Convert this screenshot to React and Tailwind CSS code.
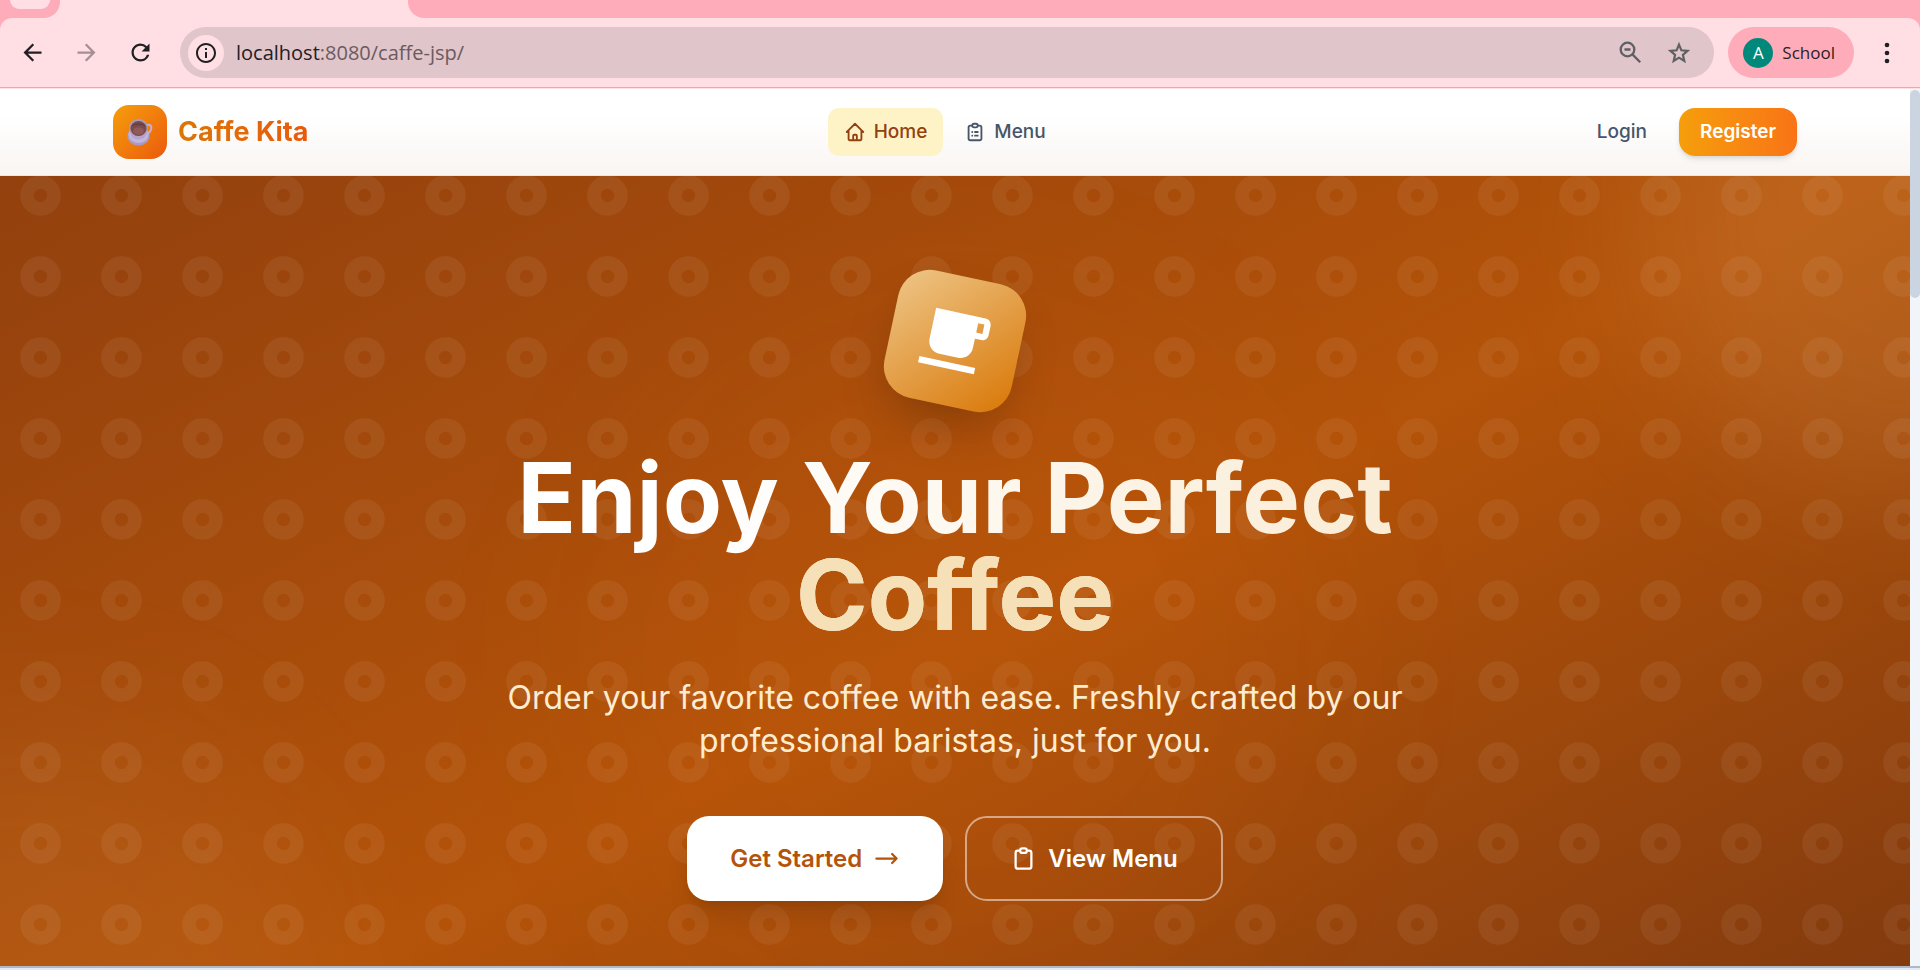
import React from 'react'
import {
  HiOutlineArrowNarrowRight,
  HiOutlineClipboard,
  HiOutlineClipboardList,
  HiOutlineHome,
} from 'react-icons/hi'
import { MdArrowBack, MdArrowForward, MdInfoOutline, MdRefresh } from 'react-icons/md'

function TabStrip() {
  return (
    <div className="flex h-[18px] bg-[#ffacba]">
      <div className="w-[60px] shrink-0 bg-[#ffdfe4]">
        <div className="flex h-[18px] justify-center rounded-br-[16px] bg-[#ffacba]">
          <div className="h-[9px] w-10 rounded-b-[14px] bg-[#ffdfe4]" />
        </div>
      </div>
      <div className="w-[348px] shrink-0 bg-[#ffdfe4]" />
      <div className="flex-1 bg-[#ffdfe4]">
        <div className="h-full rounded-bl-[16px] bg-[#ffacba]" />
      </div>
    </div>
  )
}

function BrowserBar() {
  return (
    <div className="bg-[#ffacba]">
      <div className="flex h-[69px] items-center rounded-t-[12px] bg-[#ffdfe4] pr-[26px] pl-[19px]">
        <button aria-label="Back" className="mr-[27px] text-[#1f2023]">
          <MdArrowBack size={27} />
        </button>
        <button aria-label="Forward" className="mr-[27px] text-[#a58f94]">
          <MdArrowForward size={27} />
        </button>
        <button aria-label="Reload" className="mr-[26px] text-[#1f2023]">
          <MdRefresh size={27} />
        </button>
        <div className="flex h-[51px] flex-1 items-center rounded-full bg-[#e0c5ca] pr-[22px] pl-2">
          <button
            aria-label="Site information"
            className="flex size-9 items-center justify-center rounded-full bg-[#ffdfe4] text-[#1f2023]"
          >
            <MdInfoOutline size={24} />
          </button>
          <div className="ml-3 flex-1 font-['Open_Sans','Noto_Sans',sans-serif] text-[20px] text-[#6a5b60]">
            <span className="text-[#1f2023]">localhost</span>:8080/caffe-jsp/
          </div>
          <button aria-label="Zoom" className="mr-6 text-[#5f6063]">
            <svg width="23" height="23" viewBox="0 0 23 23" fill="none" stroke="currentColor" strokeWidth="2.3">
              <circle cx="8.5" cy="8.5" r="6.8" />
              <path d="M5.5 8.5h6M13.4 13.4l7.8 7.8" />
            </svg>
          </button>
          <button aria-label="Bookmark" className="text-[#5f6063]">
            <svg width="26" height="26" viewBox="0 0 24 24" fill="none" stroke="currentColor" strokeWidth="2">
              <path d="M12 4.200l2.200 5.300 5.700.5-4.300 3.700 1.300 5.600L12 16.300l-4.900 3 1.300-5.600L4.100 10l5.700-.5z" />
            </svg>
          </button>
        </div>
        <button className="ml-[14px] flex h-[51px] items-center rounded-full bg-[#ffacba] pr-[19px] pl-[15px] font-['Open_Sans','Noto_Sans',sans-serif] text-[17px] text-[#2b1d21]">
          <span className="mr-[9px] flex size-[30px] items-center justify-center rounded-full bg-[#00897b] text-[17px] text-white">
            A
          </span>
          School
        </button>
        <button aria-label="More" className="ml-[26px] text-[#1f2023]">
          <svg width="14" height="24" viewBox="0 0 14 24" fill="currentColor">
            <circle cx="7" cy="4" r="2.3" />
            <circle cx="7" cy="12" r="2.3" />
            <circle cx="7" cy="20" r="2.3" />
          </svg>
        </button>
      </div>
      <div className="h-px bg-[#d3b3bb]" />
      <div className="h-px bg-[#ffdfe4]" />
    </div>
  )
}

function CupLogo() {
  return (
    <svg width="26" height="28" viewBox="0 0 26 28">
      <ellipse cx="11.5" cy="18" rx="11" ry="9.5" fill="#a99bc8" />
      <ellipse cx="11.5" cy="16.5" rx="10" ry="8.5" fill="#c3b6dc" />
      <path d="M19 8c3-2.6 6-.5 5.2 3-.7 3-3.7 4.5-6.2 4.5" fill="none" stroke="#c3b0cf" strokeWidth="2" />
      <path d="M2.5 9c0 8 3 12.5 9 12.5S20.5 17 20.5 9z" fill="#b3a4d0" />
      <ellipse cx="11.5" cy="9.5" rx="9.3" ry="8.7" fill="#a89bb5" />
      <ellipse cx="11.5" cy="10.5" rx="8" ry="7.5" fill="#7a4a4c" />
      <path d="M4 8.5c2-4 13-4 15 0-3-2.2-12-2.2-15 0z" fill="#5c3a40" />
      <ellipse cx="11.5" cy="13" rx="5.5" ry="3.8" fill="#8f5a58" />
    </svg>
  )
}

function Navbar() {
  return (
    <header className="border-b border-[#e2e8f0] bg-linear-to-b from-white from-30% to-[#f9f5f2]">
      <div className="mx-auto flex h-[86px] max-w-[1728px] items-center justify-between px-[22px]">
        <a href="#" className="flex items-center gap-[11px]">
          <span className="flex size-[54px] items-center justify-center rounded-2xl bg-linear-to-br from-[#f59e0b] to-[#ea580c]">
            <CupLogo />
          </span>
          <span className="bg-linear-to-r from-[#d97706] to-[#ea580c] bg-clip-text text-[27px] font-bold text-transparent">
            Caffe Kita
          </span>
        </a>
        <nav className="flex items-center gap-[5px] text-[19px] font-medium">
          <a href="#" className="flex h-12 items-center gap-2 rounded-[11px] bg-[#fef3c7] px-4 text-[#92400e]">
            <HiOutlineHome size={22} />
            Home
          </a>
          <a href="#" className="flex h-12 items-center gap-2 rounded-[11px] px-4 text-[#475569]">
            <HiOutlineClipboardList size={22} />
            Menu
          </a>
        </nav>
        <div className="flex items-center gap-4 text-[19px]">
          <a href="#" className="px-4 font-medium text-[#475569]">
            Login
          </a>
          <a
            href="#"
            className="flex h-12 items-center rounded-2xl bg-linear-to-r from-[#f59e0b] to-[#f97316] px-[21px] font-semibold text-white shadow-md"
          >
            Register
          </a>
        </div>
      </div>
    </header>
  )
}

function HeroBackground() {
  return (
    <div className="absolute inset-x-0 -top-[21px] -bottom-[190px] bg-linear-to-br/srgb from-[#92400e] via-[#b45309] to-[#78350f]">
      <div className="absolute -top-[210px] -right-[270px] size-[540px] rounded-full bg-[#fcd9a0]/12 blur-[70px]" />
      <div className="absolute -bottom-[160px] -left-[270px] size-[600px] rounded-full bg-[#fcd9a0]/6 blur-[80px]" />
      <div className="absolute inset-0 m-auto size-[700px] rounded-full bg-[#f97316]/6 blur-[90px]" />
      <svg className="absolute inset-0 size-full" aria-hidden="true">
        <defs>
          <pattern id="rings" width="81" height="81" patternUnits="userSpaceOnUse">
            <circle cx="40.5" cy="40.5" r="13.5" fill="none" stroke="#fff" strokeOpacity="0.06" strokeWidth="13.5" />
          </pattern>
        </defs>
        <rect width="100%" height="100%" fill="url(#rings)" />
      </svg>
    </div>
  )
}

function Hero() {
  return (
    <section className="relative flex-1 overflow-hidden">
      <HeroBackground />
      <div className="relative mx-auto flex max-w-[1210px] flex-col items-center px-[22px] pt-[100px] pb-16 text-center">
        <div className="flex size-[130px] rotate-12 items-center justify-center rounded-[32px] bg-linear-to-br/srgb from-[#eec688] to-[#d97706] text-white shadow-2xl">
          <svg width="76" height="76" viewBox="0 0 24 24" fill="currentColor" aria-hidden="true">
            <path d="M20 3H4v10c0 2.21 1.79 4 4 4h6c2.21 0 4-1.79 4-4v-3h2c1.11 0 2-.89 2-2V5c0-1.11-.89-2-2-2zm0 5h-2V5h2v3zM2 21h18v-2H2v2z" />
          </svg>
        </div>
        <h1 className="mt-[43px] bg-linear-to-r from-white from-20% to-[#faecd5] bg-clip-text text-[97px] leading-[97px] font-bold text-transparent">
          Enjoy Your Perfect
          <br />
          <span className="text-[#f5e0b7]">Coffee</span>
        </h1>
        <p className="mt-[33px] max-w-[960px] text-[32px] leading-[43px] text-[#fdecd0]">
          Order your favorite coffee with ease. Freshly crafted by our professional baristas, just for you.
        </p>
        <div className="mt-[54px] flex gap-[22px] text-[24px] font-semibold">
          <a
            href="#"
            className="flex h-[85px] items-center gap-[11px] rounded-[22px] bg-white px-[43px] text-[#b45309] shadow-xl"
          >
            Get Started
            <HiOutlineArrowNarrowRight size={27} />
          </a>
          <a
            href="#"
            className="flex h-[85px] items-center gap-[11px] rounded-[22px] border-2 border-white/50 px-[43px] text-white"
          >
            <HiOutlineClipboard size={27} />
            View Menu
          </a>
        </div>
      </div>
    </section>
  )
}

export default function App() {
  return (
    <div className="flex min-h-screen flex-col font-['Inter',sans-serif]">
      <TabStrip />
      <BrowserBar />
      <div className="flex flex-1">
        <main className="flex flex-1 flex-col">
          <Navbar />
          <Hero />
        </main>
        <div className="w-[10px] bg-[#f1f5f9] pt-px">
          <div className="h-[208px] rounded-full bg-[#cbd5e1]" />
        </div>
      </div>
      <div className="h-1 border-t-2 border-[#b0b8c4] bg-[#e2eaf5]" />
    </div>
  )
}
